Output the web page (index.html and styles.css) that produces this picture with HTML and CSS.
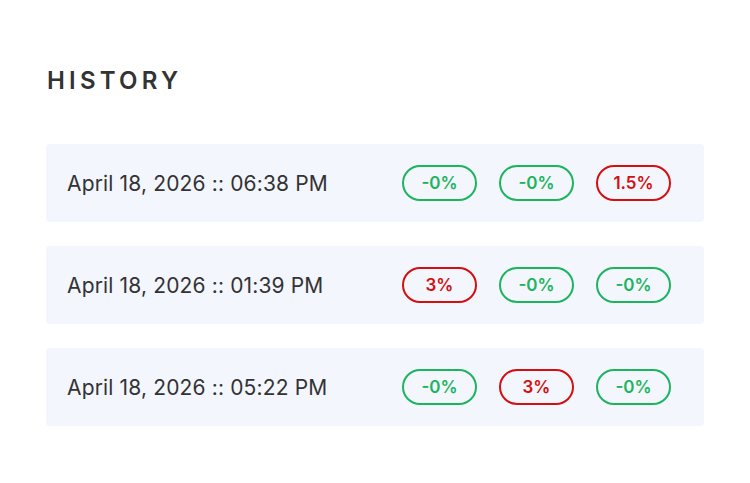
FILE: index.html
```html
<!DOCTYPE html>
<html>
<head>
<meta charset="utf-8">
<link rel="stylesheet" href="styles.css">
</head>
<body>
<main class="history">
  <h2 class="title">HISTORY</h2>
  <ul class="list">
    <li class="row">
      <span class="date">April 18, 2026 :: 06:38 PM</span>
      <div class="pills">
        <span class="pill good">-0%</span>
        <span class="pill good">-0%</span>
        <span class="pill bad">1.5%</span>
      </div>
    </li>
    <li class="row">
      <span class="date">April 18, 2026 :: 01:39 PM</span>
      <div class="pills">
        <span class="pill bad">3%</span>
        <span class="pill good">-0%</span>
        <span class="pill good">-0%</span>
      </div>
    </li>
    <li class="row">
      <span class="date">April 18, 2026 :: 05:22 PM</span>
      <div class="pills">
        <span class="pill good">-0%</span>
        <span class="pill bad">3%</span>
        <span class="pill good">-0%</span>
      </div>
    </li>
  </ul>
</main>
</body>
</html>
```
FILE: styles.css
```css
html, body {
  margin: 0;
  padding: 0;
  background: #ffffff;
}
body {
  font-family: "Inter", "Open Sans", sans-serif;
  color: #333;
}
.history {
  padding: 66px 46px 0 46px;
}
.title {
  margin: 0 0 48px 1px;
  font-size: 24px;
  line-height: 30px;
  font-weight: 600;
  letter-spacing: 4.2px;
  color: #333;
}
.list {
  list-style: none;
  margin: 0;
  padding: 0;
  display: flex;
  flex-direction: column;
  gap: 24px;
}
.row {
  height: 78px;
  background: #f3f6fd;
  border-radius: 4px;
  display: flex;
  align-items: center;
  justify-content: space-between;
  padding: 0 33px 0 21px;
}
.date {
  font-size: 21px;
  font-weight: 400;
  letter-spacing: 0.15px;
  color: #333;
}
.pills {
  display: flex;
  gap: 22px;
}
.pill {
  width: 75px;
  height: 36px;
  box-sizing: border-box;
  border: 2px solid;
  border-radius: 18px;
  display: flex;
  align-items: center;
  justify-content: center;
  font-size: 17px;
  font-weight: 600;
}
.good {
  border-color: #1db45e;
  color: #1db45e;
}
.bad {
  border-color: #d40f0f;
  color: #d40f0f;
}
```
